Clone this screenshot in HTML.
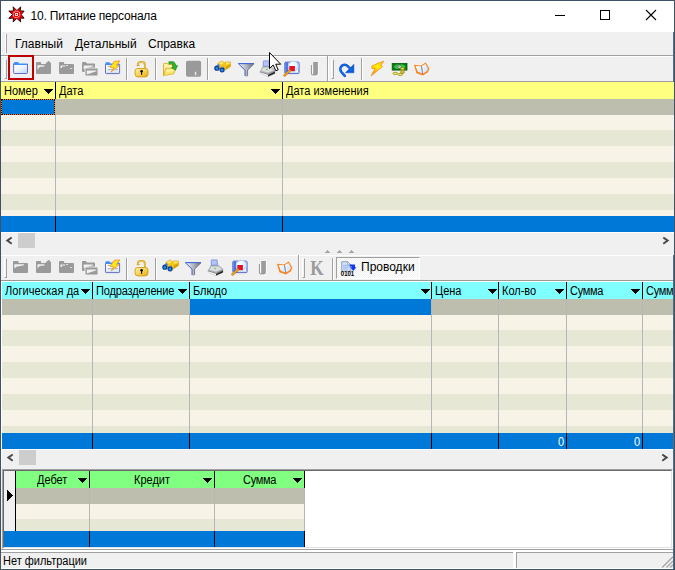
<!DOCTYPE html>
<html><head><meta charset="utf-8"><title>10. Питание персонала</title>
<style>
*{margin:0;padding:0;box-sizing:border-box}
html,body{width:675px;height:570px;overflow:hidden;background:#f0f0f0;font-family:"Liberation Sans",sans-serif;}
#w{position:absolute;left:0;top:0;width:675px;height:570px;background:#f0f0f0;overflow:hidden}
.a{position:absolute}
.t{position:absolute;white-space:nowrap;color:#000;line-height:1}
.g{font-size:11px}
.vl{position:absolute;width:1px;background:#000}
.gl{position:absolute;width:1px;background:#b6b6b6}
.ar{position:absolute;width:0;height:0;border-left:4.5px solid transparent;border-right:4.5px solid transparent;border-top:5px solid #000}
.L{background:#f7f3e7}.D{background:#e7e7d6}.S{background:#bdbead}.B{background:#0078d7}
.sep{position:absolute;width:2px;border-left:1px solid #a0a0a0;border-right:1px solid #fff}
svg{position:absolute;overflow:visible}
</style></head><body>
<div id="w">
<div class="a" style="left:0px;top:0px;width:675px;height:32px;background:#fff;"></div>
<div class="a" style="left:1px;top:32px;width:1px;height:23px;background:#fff;"></div>
<svg style="left:0;top:0" width="32" height="30" viewBox="0 0 32 30"><path d="M13.1 6.8L16.9 10.6L20.7 6.8L20.2 10.9L24.1 11.1L21.2 14.5L24.1 18.2L20.2 18.1L20.7 21.9L16.9 18.4L13.1 21.9L13.6 18.1L8.8 18.4L12.6 14.5L8.8 11.1L13.6 10.9Z" fill="#f40000" stroke="#1a0000" stroke-width="0.9" stroke-linejoin="miter"/><circle cx="16.5" cy="14.4" r="3.3" fill="none" stroke="#fff" stroke-width="1.1" stroke-dasharray="1 1"/><rect x="15.5" y="13.4" width="2.1" height="2.1" fill="none" stroke="#fff" stroke-width="0.8"/></svg>
<div class="t " style="left:30.5px;top:9.5px;font-size:12px;letter-spacing:-0.2px">10. Питание персонала</div>
<svg style="left:555px;top:10px" width="110" height="12"><path d="M0 5.5H10" stroke="#000" stroke-width="1"/><rect x="45.5" y="0.5" width="9" height="9" fill="none" stroke="#000" stroke-width="1"/><path d="M91 0L101 10M101 0L91 10" stroke="#000" stroke-width="1.1"/></svg>
<div class="a" style="left:5px;top:34px;width:2px;height:19px;border-left:1px solid #fff;border-right:1px solid #a0a0a0"></div>
<div class="t " style="left:15px;top:38px;font-size:12px;">Главный</div>
<div class="t " style="left:75px;top:38px;font-size:12px;">Детальный</div>
<div class="t " style="left:148px;top:38px;font-size:12px;">Справка</div>
<div class="a" style="left:1px;top:55px;width:673px;height:1px;background:#a0a0a0;"></div>
<div class="a" style="left:1px;top:56px;width:673px;height:1px;background:#fff;"></div>
<div class="a" style="left:1px;top:81px;width:673px;height:1px;background:#a0a0a0;"></div>
<div class="a" style="left:4px;top:59px;width:3px;height:20px;border-left:1px solid #fff;border-top:1px solid #fff;border-right:1px solid #a0a0a0;border-bottom:1px solid #a0a0a0"></div>
<div class="a" style="left:8px;top:55px;width:26px;height:25px;background:#f0f0f0;border:2px solid #c00000"></div>
<div class="a" style="left:10px;top:57px;width:22px;height:21px;background:#f0f0f0;border:1px solid #e4f1fb"></div>
<svg style="left:13px;top:60px" width="16" height="17" viewBox="0 0 16 17"><defs><linearGradient id="fb" x1="0" y1="0" x2="1" y2="1"><stop offset="0" stop-color="#ffffff"/><stop offset="0.45" stop-color="#eef4fc"/><stop offset="1" stop-color="#b4d4f6"/></linearGradient></defs><path d="M1 3Q1 2 2 2H4.6Q5.4 2 5.7 2.8L6 3.5H14Q15 3.5 15 4.5V5.4H0.2V4Q0.2 3.2 1 3Z" fill="#3f8ff8"/><path d="M0.6 4.9H14.5V12.6Q14.5 13.5 13.6 13.5H1.5Q0.6 13.5 0.6 12.6Z" fill="url(#fb)"/><path d="M0.6 4.6V12.6Q0.6 13.5 1.5 13.5H13.6Q14.5 13.5 14.5 12.6V4.6" fill="none" stroke="#5a5cc0" stroke-width="0.9"/></svg>
<svg style="left:36px;top:60px" width="16" height="17" viewBox="0 0 16 17"><path d="M0 3Q0 2 1 2H4.2Q5.2 2 5.2 3V4H9.3L12 1.2Q12.6 0.7 13.2 1.2L15 3.2V13Q15 14 14 14H1Q0 14 0 13Z" fill="#9a9a9a"/><path d="M1.5 5.3H8.4V6.4L3.5 7.1L1.5 9.7Z" fill="#f0f0f0"/></svg>
<svg style="left:59px;top:60px" width="16" height="17" viewBox="0 0 16 17"><path d="M0 3Q0 2 1 2H4.2Q5.2 2 5.2 3V4H14Q15 4 15 5V13Q15 14 14 14H1Q0 14 0 13Z" fill="#9a9a9a"/><path d="M1.5 5.5H6.2V6.6H3V8H1.5ZM7.2 5H8.8V6H7.2ZM10.9 8.2H13.2V9.1H10.9Z" fill="#f0f0f0"/></svg>
<svg style="left:82px;top:60px" width="17" height="17" viewBox="0 0 17 17"><path d="M0 3Q0 2 1 2H3.8L5 3.5H12Q13 3.5 13 4.5V12H1Q0 12 0 11Z" fill="#9a9a9a"/><path d="M1.6 5.5H11.2V6.3L1.6 9Z" fill="#f0f0f0"/><path d="M3 9Q3 8 4 8H15Q16 8 16 9V15Q16 16 15 16H4Q3 16 3 15Z" fill="#9a9a9a" stroke="#f0f0f0" stroke-width="0.9"/><path d="M4.8 10.4H14.3V11.2L4.8 14.6Z" fill="#f0f0f0"/></svg>
<svg style="left:105px;top:60px" width="16" height="17" viewBox="0 0 16 17"><defs><linearGradient id="dl105_60" x1="0" y1="0" x2="0" y2="1"><stop offset="0" stop-color="#ffffff"/><stop offset="0.6" stop-color="#f4f8fe"/><stop offset="1" stop-color="#c2dcf8"/></linearGradient></defs><path d="M0.4 5V3.2Q0.4 2.3 1.3 2.3H4Q4.7 2.3 5 3L5.3 3.6H13.8Q14.7 3.6 14.7 4.5V5Z" fill="#3f8ff8"/><path d="M0.5 4.9H14.6V12.8Q14.6 13.6 13.8 13.6H1.3Q0.5 13.6 0.5 12.8Z" fill="url(#dl105_60)"/><path d="M0.5 4.4V12.8Q0.5 13.6 1.3 13.6H13.8Q14.6 13.6 14.6 12.8V4.4" fill="none" stroke="#5a5cc0" stroke-width="0.9"/><path d="M2.6 6.3H7M2.6 9.7H13" stroke="#9aa4b4" stroke-width="0.9"/><path d="M9.3 1.3L14.8 0.9L11.4 5.6L13.9 5.9L6.2 11.9L8.9 7.9L5.1 7.2Z" fill="#ffe61a" stroke="#f08c1c" stroke-width="0.8" stroke-linejoin="round"/></svg>
<div class="sep" style="left:126px;top:58px;height:22px"></div>
<svg style="left:134px;top:60px" width="16" height="18" viewBox="0 0 16 18"><defs><linearGradient id="lk134_60" x1="0" y1="0" x2="1" y2="1"><stop offset="0" stop-color="#fdf0b0"/><stop offset="0.5" stop-color="#f7d458"/><stop offset="1" stop-color="#e6a818"/></linearGradient></defs><path d="M3.8 5.6V4.7Q3.8 1.9 7.4 1.9Q10.9 1.9 10.9 4.7V8.6" fill="none" stroke="#d39c10" stroke-width="1.9" /><path d="M3.8 5.2V4.7Q3.8 2 7.4 2Q10.9 2 10.9 4.7V8.6" fill="none" stroke="#fbe9a0" stroke-width="0.6"/><rect x="2.8" y="5.2" width="2.8" height="0.9" fill="#d39c10"/><path d="M3.4 8.5H11.8Q14 8.7 14 11V14Q14 16.9 11 16.9H4Q1.1 16.9 1.1 14V11Q1.1 8.7 3.4 8.5Z" fill="url(#lk134_60)" stroke="#d39c10" stroke-width="0.9"/><circle cx="7.6" cy="11.3" r="1.3" fill="#000"/><rect x="7.1" y="11.6" width="1" height="3.3" fill="#000"/></svg>
<div class="sep" style="left:155px;top:58px;height:22px"></div>
<svg style="left:163px;top:60px" width="16" height="17" viewBox="0 0 16 17"><path d="M0.5 15.6V4.2Q0.5 3.4 1.3 3.4H4.4L5.2 4.4H9.6V8.4H3Z" fill="#fdf2a8" stroke="#d8a820" stroke-width="0.9" stroke-linejoin="round"/><path d="M3 8.3H13L10.8 13.8L0.6 15.6Z" fill="#f9e468" stroke="#dcb030" stroke-width="0.8" stroke-linejoin="round"/><path d="M4 9.2H11.4L10.6 11L2.6 12.2Z" fill="#fdf0a0"/><path d="M5.9 1.7H10Q11 1.7 11.5 2.6L13.3 6L14.6 5.5L12.4 10.2L8.6 7.7L10.3 7.1L9.3 4.4Q9.1 3.8 8.5 3.8H5.9Z" fill="#2cb82c" stroke="#0f7a12" stroke-width="0.6" stroke-linejoin="round"/></svg>
<svg style="left:186px;top:60px" width="16" height="17" viewBox="0 0 16 17"><rect x="0" y="0.7" width="15.1" height="16" rx="1.8" fill="#9a9a9a"/><rect x="8.9" y="11.8" width="1.3" height="3.4" fill="#f0f0f0"/></svg>
<div class="sep" style="left:207px;top:58px;height:22px"></div>
<svg style="left:214px;top:60px" width="17" height="17" viewBox="0 0 17 17"><path d="M3.8 3.4L8 0.9L10.4 2.8L11.6 1.9H16.4V6.6L11.4 9.9L9.4 6.8L5.6 8.6Z" fill="#f5c518" stroke="#c89200" stroke-width="0.5" stroke-linejoin="round"/><path d="M4.8 3.3L8 1.5L9.8 2.9L6.8 4.8ZM11.8 2.4H15.9V3.6L12 4.8Z" fill="#ffe873"/><path d="M12 6.2L16.3 4.2V6.6L11.6 9.7Z" fill="#d9a300"/><circle cx="2.9" cy="8.2" r="2.6" fill="#103c8c"/><circle cx="8.1" cy="9.8" r="2.6" fill="#103c8c"/><circle cx="2.9" cy="8.4" r="1.3" fill="#1e8cf0"/><circle cx="8" cy="10.1" r="1.3" fill="#1e8cf0"/><path d="M2 5.6L4.6 4L6 5.6L4.4 6.6Z" fill="#3f7fe8"/><path d="M7 7.4L9.2 6.6L10 8Z" fill="#3f7fe8"/></svg>
<svg style="left:238px;top:60px" width="17" height="18" viewBox="0 0 17 18"><defs><linearGradient id="fl238_60" x1="0" y1="0" x2="1" y2="0"><stop offset="0" stop-color="#f6f6fa"/><stop offset="0.5" stop-color="#b4b8c4"/><stop offset="1" stop-color="#686c78"/></linearGradient></defs><path d="M0.3 3.6H16L9.6 10V16L8.2 17L7 16V10Z" fill="url(#fl238_60)"/><path d="M0.3 3.6H16" stroke="#3a66d8" stroke-width="1.1"/><path d="M0.5 3.8L7 10.2V16" fill="none" stroke="#3a4fc0" stroke-width="0.9"/><path d="M16 3.8L9.6 10.2V16" fill="none" stroke="#44464e" stroke-width="0.6"/></svg>
<svg style="left:260px;top:60px" width="16" height="18" viewBox="0 0 16 18"><path d="M3.2 1.4Q3.2 0.8 3.8 0.8H8.6Q9.2 0.8 9.3 1.4L9.8 7.2H3Z" fill="#8fa6ee" stroke="#7085dc" stroke-width="0.5"/><path d="M4 1.6H8.4L8.8 5.4H3.9Z" fill="#b4c4f6"/><path d="M0.2 11.4L3 6.8H11L14.9 10.2V13.4L8 16.6L0.2 13.2Z" fill="#b4b6b9" stroke="#8c8e92" stroke-width="0.5"/><path d="M3.3 7.4H10.8L13.8 10.2L8 12.6L1.4 10.8Z" fill="#dcddde"/><circle cx="7" cy="9.4" r="0.7" fill="#30b830"/><path d="M0.2 11.4L8 13.8L14.9 10.4V11.6L8 15L0.2 12.6Z" fill="#8e9094"/><path d="M0.2 12.6L8 15L8 16.6L0.2 13.6Z" fill="#fafafa"/><path d="M8 15L14.9 11.6V13.4L8 16.6Z" fill="#25272a"/></svg>
<svg style="left:284px;top:60px" width="16" height="18" viewBox="0 0 16 18"><defs><radialGradient id="sg284_60" cx="0.4" cy="0.3" r="0.8"><stop offset="0" stop-color="#ffffff"/><stop offset="1" stop-color="#bfe4fb"/></radialGradient></defs><path d="M0.9 3Q0.9 2.2 1.7 2.2H14.2Q15 2.2 15 3V12.8Q15 13.6 14.2 13.6H1.7Q0.9 13.6 0.9 12.8Z" fill="#f4f8ff" stroke="#3f51c8" stroke-width="1"/><path d="M1.3 2.6H4.4V13.2H1.3Z" fill="#4576e6"/><path d="M4.4 2.6H14.6V3.6H4.4Z" fill="#b9cef6"/><path d="M5 12H14.4V13.2H5Z" fill="#c6dcf8"/><circle cx="9.3" cy="6.3" r="5.1" fill="url(#sg284_60)" stroke="#a9c6ea" stroke-width="0.7"/><rect x="5.3" y="6" width="5.6" height="5.1" fill="#ea0f1c"/><path d="M5.9 10.6L0.6 15.4" stroke="#b86a04" stroke-width="2.5" stroke-linecap="round"/><path d="M5.9 10.5L0.7 15.2" stroke="#f8a624" stroke-width="1.5" stroke-linecap="round"/></svg>
<svg style="left:307px;top:60px" width="16" height="18" viewBox="0 0 16 18"><path d="M6.2 2H10.9V13.6Q10.9 15.6 8.9 15.6H6Q3.9 15.6 3.9 13.6V5H5V13.4Q5 14.2 5.8 14.2H6.2Z" fill="#fff" transform="translate(0.8,0.8)"/><path d="M6.2 2H10.9V13.6Q10.9 15.6 8.9 15.6H6Q3.9 15.6 3.9 13.6V5H5V13.4Q5 14.2 5.8 14.2H6.2Z" fill="#9c9c9c"/></svg>
<div class="sep" style="left:327px;top:56px;height:25px"></div>
<div class="a" style="left:331px;top:59px;width:3px;height:20px;border-left:1px solid #fff;border-top:1px solid #fff;border-right:1px solid #a0a0a0;border-bottom:1px solid #a0a0a0"></div>
<svg style="left:339px;top:60px" width="16" height="18" viewBox="0 0 16 18"><path d="M5.8 15.8L2.4 12C0.8 10 0.9 6.8 3.4 5.4C5.6 4.2 7.6 5 9 6.4L12.4 9.8" fill="none" stroke="#0a4cc4" stroke-width="2.5" stroke-linecap="round" stroke-linejoin="round"/><path d="M14.9 4.3V12.8H6.4Z" fill="#0a5ce0" stroke="#0a4cc4" stroke-width="0.5" stroke-linejoin="round"/><path d="M5.8 15.8L2.4 12C0.8 10 0.9 6.8 3.4 5.4C5.6 4.2 7.6 5 9 6.4L12.4 9.8" fill="none" stroke="#1474f0" stroke-width="1.1" stroke-linecap="round" stroke-linejoin="round"/></svg>
<div class="sep" style="left:361px;top:58px;height:22px"></div>
<svg style="left:368px;top:60px" width="17" height="17" viewBox="0 0 17 17"><defs><linearGradient id="lt368_60" x1="0.7" y1="0" x2="0.2" y2="1"><stop offset="0" stop-color="#ffc81a"/><stop offset="0.4" stop-color="#fff000"/><stop offset="0.7" stop-color="#ffb010"/><stop offset="1" stop-color="#ff8208"/></linearGradient></defs><path d="M15.8 1.2L11 2.7L3.9 6V8.5H7L3 15.9L14.6 6.5L12.8 5.4Z" fill="url(#lt368_60)" stroke="#f2860e" stroke-width="0.7" stroke-linejoin="round"/></svg>
<svg style="left:391px;top:60px" width="17" height="17" viewBox="0 0 17 17"><rect x="1.2" y="3.4" width="14.8" height="6.7" fill="#0a7a12" stroke="#065a0a" stroke-width="0.8"/><path d="M2.6 6.7L5.4 4.6H11.8L14.6 6.7L11.8 8.9H5.4Z" fill="#2ed23a"/><ellipse cx="8.2" cy="6.6" rx="2.1" ry="1.7" fill="#f1f1e6" stroke="#30343a" stroke-width="0.6"/><ellipse cx="7.9" cy="6.4" rx="0.9" ry="0.8" fill="#8a8f86"/><g fill="#f2e45a" stroke="#8c8408" stroke-width="0.7"><ellipse cx="11.5" cy="12.6" rx="1.9" ry="0.9"/><ellipse cx="11.5" cy="11.2" rx="1.9" ry="0.9"/><ellipse cx="11.5" cy="9.8" rx="1.9" ry="0.9"/><ellipse cx="11.5" cy="8.4" rx="1.9" ry="0.9"/><ellipse cx="4.3" cy="13.4" rx="2.4" ry="1.1"/><ellipse cx="9.3" cy="14.5" rx="2.3" ry="1.1"/></g></svg>
<svg style="left:414px;top:60px" width="16" height="17" viewBox="0 0 16 17"><defs><linearGradient id="bk414_60" x1="0" y1="0" x2="1" y2="1"><stop offset="0" stop-color="#ffffff"/><stop offset="1" stop-color="#cfe2fb"/></linearGradient></defs><path d="M0 4.8L7 5.4L11.7 2.6L15.4 8.4L14 12.2L8.9 15.4L2.4 13.2Z" fill="#f8841a"/><path d="M1.6 6L7 6.3L8.3 13.4L3.8 11.8Z" fill="url(#bk414_60)"/><path d="M7.9 6L11.4 4L14 8.4L13 11L9.2 13.4Z" fill="url(#bk414_60)"/><path d="M7.4 5.8L8.8 14" stroke="#5a8ae0" stroke-width="0.7"/><path d="M9.4 7.6L11.8 6.2M9.8 9.4L12.8 7.8M10.2 11.2L13 9.6" stroke="#c4d8f4" stroke-width="0.5"/></svg>
<div class="a" style="left:1px;top:82px;width:673px;height:17px;background:#ffff80;"></div>
<div class="a S" style="left:1px;top:99px;width:673px;height:16px"></div>
<div class="a L" style="left:1px;top:115px;width:673px;height:15px"></div>
<div class="a D" style="left:1px;top:130px;width:673px;height:16px"></div>
<div class="a L" style="left:1px;top:146px;width:673px;height:16px"></div>
<div class="a D" style="left:1px;top:162px;width:673px;height:16px"></div>
<div class="a L" style="left:1px;top:178px;width:673px;height:16px"></div>
<div class="a D" style="left:1px;top:194px;width:673px;height:16px"></div>
<div class="a L" style="left:1px;top:210px;width:673px;height:6px"></div>
<div class="a B" style="left:1px;top:216px;width:673px;height:16px"></div>
<div class="a" style="left:1px;top:99px;width:54px;height:16px;background:#0078d7;border:1px solid #ff8000"><div class="a" style="left:-1px;top:-1px;width:54px;height:16px;border:1px dotted #000"></div></div>
<div class="vl" style="left:55px;top:82px;height:17px"></div>
<div class="gl" style="left:55px;top:99px;height:117px"></div>
<div class="vl" style="left:55px;top:216px;height:16px"></div>
<div class="vl" style="left:282px;top:82px;height:17px"></div>
<div class="gl" style="left:282px;top:99px;height:117px"></div>
<div class="vl" style="left:282px;top:216px;height:16px"></div>
<div class="t" style="left:4px;top:85px;font-size:12px;transform:scaleX(0.9167);transform-origin:0 0;letter-spacing:0px;color:#000">Номер</div>
<svg style="left:44px;top:89px" width="9" height="5" shape-rendering="crispEdges"><path d="M0 0H9V1H8V2H7V3H6V4H5V5H4V4H3V3H2V2H1V1H0Z" fill="#000"/></svg>
<div class="t" style="left:59px;top:85px;font-size:12px;transform:scaleX(0.9167);transform-origin:0 0;letter-spacing:0px;color:#000">Дата</div>
<svg style="left:271px;top:89px" width="9" height="5" shape-rendering="crispEdges"><path d="M0 0H9V1H8V2H7V3H6V4H5V5H4V4H3V3H2V2H1V1H0Z" fill="#000"/></svg>
<div class="t" style="left:286px;top:85px;font-size:12px;transform:scaleX(0.9167);transform-origin:0 0;letter-spacing:0px;color:#000">Дата изменения</div>
<div class="a" style="left:1px;top:232px;width:673px;height:17px;background:#f0f0f0;"></div>
<div class="a" style="left:1px;top:232px;width:673px;height:1px;background:#fff;"></div>
<div class="a" style="left:18px;top:233px;width:17px;height:15px;background:#cdcdcd;"></div>
<svg style="left:6px;top:237px" width="8" height="8"><path d="M5.7 0.5L1.3 3.6L5.7 6.7" fill="none" stroke="#484848" stroke-width="1.9"/></svg>
<svg style="left:662.4px;top:237px" width="8" height="8"><path d="M1.3 0.5L5.7 3.6L1.3 6.7" fill="none" stroke="#484848" stroke-width="1.9"/></svg>
<svg style="left:325px;top:250px" width="5" height="3" shape-rendering="crispEdges"><path d="M2 0H3V1H4V2H5V3H0V2H1V1H2Z" fill="#a8a8a8"/></svg>
<svg style="left:337px;top:250px" width="5" height="3" shape-rendering="crispEdges"><path d="M2 0H3V1H4V2H5V3H0V2H1V1H2Z" fill="#a8a8a8"/></svg>
<svg style="left:349px;top:250px" width="5" height="3" shape-rendering="crispEdges"><path d="M2 0H3V1H4V2H5V3H0V2H1V1H2Z" fill="#a8a8a8"/></svg>
<div class="a" style="left:1px;top:255px;width:673px;height:1px;background:#fff;"></div>
<div class="a" style="left:1px;top:280px;width:673px;height:1px;background:#989898;"></div>
<div class="a" style="left:1px;top:281px;width:673px;height:1px;background:#fff;"></div>
<div class="a" style="left:1px;top:282px;width:1px;height:184px;background:#fff;"></div>
<div class="a" style="left:4px;top:258px;width:3px;height:20px;border-left:1px solid #fff;border-top:1px solid #fff;border-right:1px solid #a0a0a0;border-bottom:1px solid #a0a0a0"></div>
<svg style="left:13px;top:259px" width="16" height="17" viewBox="0 0 16 17"><path d="M0 3Q0 2 1 2H4.6Q5.6 2 5.6 3V4H14Q15 4 15 5V13Q15 14 14 14H1Q0 14 0 13Z" fill="#9a9a9a"/><path d="M1.3 5.2H11V6.3L3.4 7.7L1.3 9.6Z" fill="#f0f0f0"/></svg>
<svg style="left:36px;top:259px" width="16" height="17" viewBox="0 0 16 17"><path d="M0 3Q0 2 1 2H4.2Q5.2 2 5.2 3V4H9.3L12 1.2Q12.6 0.7 13.2 1.2L15 3.2V13Q15 14 14 14H1Q0 14 0 13Z" fill="#9a9a9a"/><path d="M1.5 5.3H8.4V6.4L3.5 7.1L1.5 9.7Z" fill="#f0f0f0"/></svg>
<svg style="left:59px;top:259px" width="16" height="17" viewBox="0 0 16 17"><path d="M0 3Q0 2 1 2H4.2Q5.2 2 5.2 3V4H14Q15 4 15 5V13Q15 14 14 14H1Q0 14 0 13Z" fill="#9a9a9a"/><path d="M1.5 5.5H6.2V6.6H3V8H1.5ZM7.2 5H8.8V6H7.2ZM10.9 8.2H13.2V9.1H10.9Z" fill="#f0f0f0"/></svg>
<svg style="left:82px;top:259px" width="17" height="17" viewBox="0 0 17 17"><path d="M0 3Q0 2 1 2H3.8L5 3.5H12Q13 3.5 13 4.5V12H1Q0 12 0 11Z" fill="#9a9a9a"/><path d="M1.6 5.5H11.2V6.3L1.6 9Z" fill="#f0f0f0"/><path d="M3 9Q3 8 4 8H15Q16 8 16 9V15Q16 16 15 16H4Q3 16 3 15Z" fill="#9a9a9a" stroke="#f0f0f0" stroke-width="0.9"/><path d="M4.8 10.4H14.3V11.2L4.8 14.6Z" fill="#f0f0f0"/></svg>
<svg style="left:105px;top:259px" width="16" height="17" viewBox="0 0 16 17"><defs><linearGradient id="dl105_259" x1="0" y1="0" x2="0" y2="1"><stop offset="0" stop-color="#ffffff"/><stop offset="0.6" stop-color="#f4f8fe"/><stop offset="1" stop-color="#c2dcf8"/></linearGradient></defs><path d="M0.4 5V3.2Q0.4 2.3 1.3 2.3H4Q4.7 2.3 5 3L5.3 3.6H13.8Q14.7 3.6 14.7 4.5V5Z" fill="#3f8ff8"/><path d="M0.5 4.9H14.6V12.8Q14.6 13.6 13.8 13.6H1.3Q0.5 13.6 0.5 12.8Z" fill="url(#dl105_259)"/><path d="M0.5 4.4V12.8Q0.5 13.6 1.3 13.6H13.8Q14.6 13.6 14.6 12.8V4.4" fill="none" stroke="#5a5cc0" stroke-width="0.9"/><path d="M2.6 6.3H7M2.6 9.7H13" stroke="#9aa4b4" stroke-width="0.9"/><path d="M9.3 1.3L14.8 0.9L11.4 5.6L13.9 5.9L6.2 11.9L8.9 7.9L5.1 7.2Z" fill="#ffe61a" stroke="#f08c1c" stroke-width="0.8" stroke-linejoin="round"/></svg>
<div class="sep" style="left:126px;top:258px;height:22px"></div>
<svg style="left:134px;top:259px" width="16" height="18" viewBox="0 0 16 18"><defs><linearGradient id="lk134_259" x1="0" y1="0" x2="1" y2="1"><stop offset="0" stop-color="#fdf0b0"/><stop offset="0.5" stop-color="#f7d458"/><stop offset="1" stop-color="#e6a818"/></linearGradient></defs><path d="M3.8 5.6V4.7Q3.8 1.9 7.4 1.9Q10.9 1.9 10.9 4.7V8.6" fill="none" stroke="#d39c10" stroke-width="1.9" /><path d="M3.8 5.2V4.7Q3.8 2 7.4 2Q10.9 2 10.9 4.7V8.6" fill="none" stroke="#fbe9a0" stroke-width="0.6"/><rect x="2.8" y="5.2" width="2.8" height="0.9" fill="#d39c10"/><path d="M3.4 8.5H11.8Q14 8.7 14 11V14Q14 16.9 11 16.9H4Q1.1 16.9 1.1 14V11Q1.1 8.7 3.4 8.5Z" fill="url(#lk134_259)" stroke="#d39c10" stroke-width="0.9"/><circle cx="7.6" cy="11.3" r="1.3" fill="#000"/><rect x="7.1" y="11.6" width="1" height="3.3" fill="#000"/></svg>
<div class="sep" style="left:155px;top:258px;height:22px"></div>
<svg style="left:162px;top:259px" width="17" height="17" viewBox="0 0 17 17"><path d="M3.8 3.4L8 0.9L10.4 2.8L11.6 1.9H16.4V6.6L11.4 9.9L9.4 6.8L5.6 8.6Z" fill="#f5c518" stroke="#c89200" stroke-width="0.5" stroke-linejoin="round"/><path d="M4.8 3.3L8 1.5L9.8 2.9L6.8 4.8ZM11.8 2.4H15.9V3.6L12 4.8Z" fill="#ffe873"/><path d="M12 6.2L16.3 4.2V6.6L11.6 9.7Z" fill="#d9a300"/><circle cx="2.9" cy="8.2" r="2.6" fill="#103c8c"/><circle cx="8.1" cy="9.8" r="2.6" fill="#103c8c"/><circle cx="2.9" cy="8.4" r="1.3" fill="#1e8cf0"/><circle cx="8" cy="10.1" r="1.3" fill="#1e8cf0"/><path d="M2 5.6L4.6 4L6 5.6L4.4 6.6Z" fill="#3f7fe8"/><path d="M7 7.4L9.2 6.6L10 8Z" fill="#3f7fe8"/></svg>
<svg style="left:185px;top:259px" width="17" height="18" viewBox="0 0 17 18"><defs><linearGradient id="fl185_259" x1="0" y1="0" x2="1" y2="0"><stop offset="0" stop-color="#f6f6fa"/><stop offset="0.5" stop-color="#b4b8c4"/><stop offset="1" stop-color="#686c78"/></linearGradient></defs><path d="M0.3 3.6H16L9.6 10V16L8.2 17L7 16V10Z" fill="url(#fl185_259)"/><path d="M0.3 3.6H16" stroke="#3a66d8" stroke-width="1.1"/><path d="M0.5 3.8L7 10.2V16" fill="none" stroke="#3a4fc0" stroke-width="0.9"/><path d="M16 3.8L9.6 10.2V16" fill="none" stroke="#44464e" stroke-width="0.6"/></svg>
<svg style="left:208px;top:259px" width="16" height="18" viewBox="0 0 16 18"><path d="M3.2 1.4Q3.2 0.8 3.8 0.8H8.6Q9.2 0.8 9.3 1.4L9.8 7.2H3Z" fill="#8fa6ee" stroke="#7085dc" stroke-width="0.5"/><path d="M4 1.6H8.4L8.8 5.4H3.9Z" fill="#b4c4f6"/><path d="M0.2 11.4L3 6.8H11L14.9 10.2V13.4L8 16.6L0.2 13.2Z" fill="#b4b6b9" stroke="#8c8e92" stroke-width="0.5"/><path d="M3.3 7.4H10.8L13.8 10.2L8 12.6L1.4 10.8Z" fill="#dcddde"/><circle cx="7" cy="9.4" r="0.7" fill="#30b830"/><path d="M0.2 11.4L8 13.8L14.9 10.4V11.6L8 15L0.2 12.6Z" fill="#8e9094"/><path d="M0.2 12.6L8 15L8 16.6L0.2 13.6Z" fill="#fafafa"/><path d="M8 15L14.9 11.6V13.4L8 16.6Z" fill="#25272a"/></svg>
<svg style="left:232px;top:259px" width="16" height="18" viewBox="0 0 16 18"><defs><radialGradient id="sg232_259" cx="0.4" cy="0.3" r="0.8"><stop offset="0" stop-color="#ffffff"/><stop offset="1" stop-color="#bfe4fb"/></radialGradient></defs><path d="M0.9 3Q0.9 2.2 1.7 2.2H14.2Q15 2.2 15 3V12.8Q15 13.6 14.2 13.6H1.7Q0.9 13.6 0.9 12.8Z" fill="#f4f8ff" stroke="#3f51c8" stroke-width="1"/><path d="M1.3 2.6H4.4V13.2H1.3Z" fill="#4576e6"/><path d="M4.4 2.6H14.6V3.6H4.4Z" fill="#b9cef6"/><path d="M5 12H14.4V13.2H5Z" fill="#c6dcf8"/><circle cx="9.3" cy="6.3" r="5.1" fill="url(#sg232_259)" stroke="#a9c6ea" stroke-width="0.7"/><rect x="5.3" y="6" width="5.6" height="5.1" fill="#ea0f1c"/><path d="M5.9 10.6L0.6 15.4" stroke="#b86a04" stroke-width="2.5" stroke-linecap="round"/><path d="M5.9 10.5L0.7 15.2" stroke="#f8a624" stroke-width="1.5" stroke-linecap="round"/></svg>
<svg style="left:255px;top:259px" width="16" height="18" viewBox="0 0 16 18"><path d="M6.2 2H10.9V13.6Q10.9 15.6 8.9 15.6H6Q3.9 15.6 3.9 13.6V5H5V13.4Q5 14.2 5.8 14.2H6.2Z" fill="#fff" transform="translate(0.8,0.8)"/><path d="M6.2 2H10.9V13.6Q10.9 15.6 8.9 15.6H6Q3.9 15.6 3.9 13.6V5H5V13.4Q5 14.2 5.8 14.2H6.2Z" fill="#9c9c9c"/></svg>
<svg style="left:277px;top:259px" width="16" height="17" viewBox="0 0 16 17"><defs><linearGradient id="bk277_259" x1="0" y1="0" x2="1" y2="1"><stop offset="0" stop-color="#ffffff"/><stop offset="1" stop-color="#cfe2fb"/></linearGradient></defs><path d="M0 4.8L7 5.4L11.7 2.6L15.4 8.4L14 12.2L8.9 15.4L2.4 13.2Z" fill="#f8841a"/><path d="M1.6 6L7 6.3L8.3 13.4L3.8 11.8Z" fill="url(#bk277_259)"/><path d="M7.9 6L11.4 4L14 8.4L13 11L9.2 13.4Z" fill="url(#bk277_259)"/><path d="M7.4 5.8L8.8 14" stroke="#5a8ae0" stroke-width="0.7"/><path d="M9.4 7.6L11.8 6.2M9.8 9.4L12.8 7.8M10.2 11.2L13 9.6" stroke="#c4d8f4" stroke-width="0.5"/></svg>
<div class="sep" style="left:298px;top:255px;height:25px"></div>
<div class="a" style="left:302px;top:258px;width:3px;height:20px;border-left:1px solid #fff;border-top:1px solid #fff;border-right:1px solid #a0a0a0;border-bottom:1px solid #a0a0a0"></div>
<div class="t" style="left:307px;top:258px;font-family:'Liberation Serif',serif;font-weight:bold;font-size:21px;color:#9a9a9a;width:20px;text-align:center;transform:scaleX(0.82);transform-origin:50% 50%">K</div>
<div class="sep" style="left:332px;top:258px;height:22px"></div>
<div class="a" style="left:336px;top:257px;width:84px;height:22px;background:#f8f8f8;background:repeating-conic-gradient(#fff 0% 25%, #f0f0f0 0% 50%) 0 0/2px 2px;border-top:1px solid #a0a0a0;border-left:1px solid #a0a0a0;border-right:1px solid #fff;border-bottom:1px solid #fff"></div>
<svg style="left:340px;top:259px" width="17" height="18" viewBox="0 0 17 18"><path d="M1.7 2.7H7.6L10.8 5.9V12.3H1.7Z" fill="#cfe0f8" stroke="#7f8ea4" stroke-width="0.8"/><path d="M7.6 2.7V5.9H10.8Z" fill="#f4f8ff" stroke="#7f8ea4" stroke-width="0.6"/><path d="M3 6.4H8.6M3 8.2H9.4M3 10H8" stroke="#8fb2ea" stroke-width="0.8"/><path d="M9.6 5.6H15V8.2H16.4L13.3 12L10.2 8.2H11.8V7.6H9.6Z" fill="#1238f0"/><text x="0.8" y="17.4" font-family="Liberation Sans" font-size="6.4" font-weight="bold" fill="#000" textLength="13.4" lengthAdjust="spacingAndGlyphs">0101</text></svg>
<div class="t " style="left:361px;top:261px;font-size:12px;">Проводки</div>
<div class="a" style="left:2px;top:282px;width:671px;height:17px;background:#80ffff;"></div>
<div class="a S" style="left:2px;top:299px;width:671px;height:16px"></div>
<div class="a L" style="left:2px;top:315px;width:671px;height:15px"></div>
<div class="a D" style="left:2px;top:330px;width:671px;height:16px"></div>
<div class="a L" style="left:2px;top:346px;width:671px;height:16px"></div>
<div class="a D" style="left:2px;top:362px;width:671px;height:16px"></div>
<div class="a L" style="left:2px;top:378px;width:671px;height:16px"></div>
<div class="a D" style="left:2px;top:394px;width:671px;height:16px"></div>
<div class="a L" style="left:2px;top:410px;width:671px;height:16px"></div>
<div class="a D" style="left:2px;top:426px;width:671px;height:7px"></div>
<div class="a B" style="left:2px;top:433px;width:671px;height:16px"></div>
<div class="a" style="left:190px;top:299px;width:241px;height:16px;background:#0078d7;"></div>
<div class="vl" style="left:92px;top:282px;height:17px"></div>
<div class="gl" style="left:92px;top:299px;height:134px"></div>
<div class="vl" style="left:92px;top:433px;height:16px"></div>
<div class="vl" style="left:189px;top:282px;height:17px"></div>
<div class="gl" style="left:189px;top:299px;height:134px"></div>
<div class="vl" style="left:189px;top:433px;height:16px"></div>
<div class="vl" style="left:431px;top:282px;height:17px"></div>
<div class="gl" style="left:431px;top:299px;height:134px"></div>
<div class="vl" style="left:431px;top:433px;height:16px"></div>
<div class="vl" style="left:498px;top:282px;height:17px"></div>
<div class="gl" style="left:498px;top:299px;height:134px"></div>
<div class="vl" style="left:498px;top:433px;height:16px"></div>
<div class="vl" style="left:566px;top:282px;height:17px"></div>
<div class="gl" style="left:566px;top:299px;height:134px"></div>
<div class="vl" style="left:566px;top:433px;height:16px"></div>
<div class="vl" style="left:642px;top:282px;height:17px"></div>
<div class="gl" style="left:642px;top:299px;height:134px"></div>
<div class="vl" style="left:642px;top:433px;height:16px"></div>
<div class="t" style="left:5px;top:285px;font-size:12px;transform:scaleX(0.9167);transform-origin:0 0;letter-spacing:0.06px;color:#000">Логическая да</div>
<svg style="left:81px;top:289px" width="9" height="5" shape-rendering="crispEdges"><path d="M0 0H9V1H8V2H7V3H6V4H5V5H4V4H3V3H2V2H1V1H0Z" fill="#000"/></svg>
<div class="t" style="left:96px;top:285px;font-size:12px;transform:scaleX(0.9167);transform-origin:0 0;letter-spacing:-0.16px;color:#000">Подразделение</div>
<svg style="left:178px;top:289px" width="9" height="5" shape-rendering="crispEdges"><path d="M0 0H9V1H8V2H7V3H6V4H5V5H4V4H3V3H2V2H1V1H0Z" fill="#000"/></svg>
<div class="t" style="left:193px;top:285px;font-size:12px;transform:scaleX(0.9167);transform-origin:0 0;letter-spacing:0px;color:#000">Блюдо</div>
<svg style="left:421px;top:289px" width="9" height="5" shape-rendering="crispEdges"><path d="M0 0H9V1H8V2H7V3H6V4H5V5H4V4H3V3H2V2H1V1H0Z" fill="#000"/></svg>
<div class="t" style="left:435px;top:285px;font-size:12px;transform:scaleX(0.9167);transform-origin:0 0;letter-spacing:0px;color:#000">Цена</div>
<svg style="left:488px;top:289px" width="9" height="5" shape-rendering="crispEdges"><path d="M0 0H9V1H8V2H7V3H6V4H5V5H4V4H3V3H2V2H1V1H0Z" fill="#000"/></svg>
<div class="t" style="left:502px;top:285px;font-size:12px;transform:scaleX(0.9167);transform-origin:0 0;letter-spacing:0px;color:#000">Кол-во</div>
<svg style="left:555px;top:289px" width="9" height="5" shape-rendering="crispEdges"><path d="M0 0H9V1H8V2H7V3H6V4H5V5H4V4H3V3H2V2H1V1H0Z" fill="#000"/></svg>
<div class="t" style="left:570px;top:285px;font-size:12px;transform:scaleX(0.9167);transform-origin:0 0;letter-spacing:-0.33px;color:#000">Сумма</div>
<svg style="left:631px;top:289px" width="9" height="5" shape-rendering="crispEdges"><path d="M0 0H9V1H8V2H7V3H6V4H5V5H4V4H3V3H2V2H1V1H0Z" fill="#000"/></svg>
<div class="a" style="left:645px;top:282px;width:28px;height:17px;overflow:hidden"><div class="t" style="left:1px;top:3px;font-size:12px;transform:scaleX(0.9167);transform-origin:0 0;letter-spacing:-0.33px">Сумма</div></div>
<div class="t" style="left:558px;top:436px;font-size:12px;transform:scaleX(0.9167);transform-origin:0 0;letter-spacing:0px;color:#fff">0</div>
<div class="t" style="left:634px;top:436px;font-size:12px;transform:scaleX(0.9167);transform-origin:0 0;letter-spacing:0px;color:#fff">0</div>
<div class="a" style="left:2px;top:449px;width:671px;height:17px;background:#f0f0f0;"></div>
<div class="a" style="left:2px;top:449px;width:671px;height:1px;background:#fff;"></div>
<div class="a" style="left:19px;top:450px;width:17px;height:15px;background:#cdcdcd;"></div>
<svg style="left:7px;top:454px" width="8" height="8"><path d="M5.7 0.5L1.3 3.6L5.7 6.7" fill="none" stroke="#484848" stroke-width="1.9"/></svg>
<svg style="left:661.4px;top:454px" width="8" height="8"><path d="M1.3 0.5L5.7 3.6L1.3 6.7" fill="none" stroke="#484848" stroke-width="1.9"/></svg>
<div class="a" style="left:2px;top:469px;width:671px;height:80px;background:#fff;border-top:1px solid #a0a0a0;border-left:1px solid #a0a0a0;border-right:1px solid #fff;border-bottom:1px solid #fff"></div>
<div class="a" style="left:3px;top:470px;width:669px;height:78px;background:#fff;border-top:1px solid #696969;border-left:1px solid #696969;border-right:1px solid #e3e3e3;border-bottom:1px solid #e3e3e3"></div>
<div class="a" style="left:4px;top:471px;width:11px;height:60px;background:#f0f0f0;"></div>
<div class="a" style="left:15px;top:471px;width:1px;height:60px;background:#000;"></div>
<div class="a" style="left:16px;top:471px;width:289px;height:17px;background:#80ff80;"></div>
<div class="a S" style="left:16px;top:488px;width:289px;height:16px"></div>
<div class="a L" style="left:16px;top:504px;width:289px;height:15px"></div>
<div class="a D" style="left:16px;top:519px;width:289px;height:12px"></div>
<div class="a" style="left:4px;top:531px;width:301px;height:16px;background:#0078d7;"></div>
<div class="vl" style="left:89px;top:471px;height:17px"></div>
<div class="gl" style="left:89px;top:488px;height:43px"></div>
<div class="vl" style="left:89px;top:531px;height:16px"></div>
<div class="vl" style="left:214px;top:471px;height:17px"></div>
<div class="gl" style="left:214px;top:488px;height:43px"></div>
<div class="vl" style="left:214px;top:531px;height:16px"></div>
<div class="vl" style="left:304px;top:471px;height:17px"></div>
<div class="gl" style="left:304px;top:488px;height:43px"></div>
<div class="vl" style="left:304px;top:531px;height:16px"></div>
<div class="t" style="left:37px;top:474px;font-size:12px;transform:scaleX(0.9167);transform-origin:0 0;letter-spacing:0px;color:#000">Дебет</div>
<svg style="left:78px;top:478px" width="9" height="5" shape-rendering="crispEdges"><path d="M0 0H9V1H8V2H7V3H6V4H5V5H4V4H3V3H2V2H1V1H0Z" fill="#000"/></svg>
<div class="t" style="left:134px;top:474px;font-size:12px;transform:scaleX(0.9167);transform-origin:0 0;letter-spacing:0px;color:#000">Кредит</div>
<svg style="left:203px;top:478px" width="9" height="5" shape-rendering="crispEdges"><path d="M0 0H9V1H8V2H7V3H6V4H5V5H4V4H3V3H2V2H1V1H0Z" fill="#000"/></svg>
<div class="t" style="left:243px;top:474px;font-size:12px;transform:scaleX(0.9167);transform-origin:0 0;letter-spacing:-0.33px;color:#000">Сумма</div>
<svg style="left:293px;top:478px" width="9" height="5" shape-rendering="crispEdges"><path d="M0 0H9V1H8V2H7V3H6V4H5V5H4V4H3V3H2V2H1V1H0Z" fill="#000"/></svg>
<svg style="left:7px;top:490px" width="6" height="11" shape-rendering="crispEdges"><path d="M0 0L6 5.5L0 11Z" fill="#000"/></svg>
<div class="a" style="left:1px;top:549px;width:673px;height:1px;background:#a0a0a0;"></div>
<div class="a" style="left:1px;top:550px;width:673px;height:2px;background:#fff;"></div>
<div class="a" style="left:1px;top:552px;width:512px;height:1px;background:#a0a0a0;"></div>
<div class="a" style="left:513px;top:552px;width:3px;height:17px;background:#fff;"></div>
<div class="a" style="left:516px;top:552px;width:157px;height:1px;background:#a0a0a0;"></div>
<div class="a" style="left:516px;top:553px;width:1px;height:15px;background:#a0a0a0;"></div>
<div class="a" style="left:1px;top:568px;width:673px;height:1px;background:#fff;"></div>
<div class="t " style="left:2.5px;top:555px;font-size:12px;transform:scaleX(0.915);transform-origin:0 0">Нет фильтрации</div>
<svg style="left:660px;top:555px" width="13" height="13" viewBox="0 0 13 13"><path d="M2.2 12.5L13 1.7M6.5 12.5L13 6M10.2 12.5L13 9.7" stroke="#a6a6a6" stroke-width="1.3"/></svg>
<svg style="left:269px;top:52px" width="13" height="20" viewBox="0 0 13 20"><path d="M0.5 0.5V16.5L4.2 13L6.8 18.8L9.2 17.8L6.7 12.2H11.7Z" fill="#fff" stroke="#000" stroke-width="1"/></svg>
<div class="a" style="left:673px;top:255px;width:1px;height:314px;background:#5a6c7e;"></div>
<div class="a" style="left:673px;top:32px;width:1px;height:50px;background:#5a6c7e;"></div>
<div class="a" style="left:0;top:0;width:675px;height:570px;border:1px solid #3f5367"></div>
</div>
</body></html>
